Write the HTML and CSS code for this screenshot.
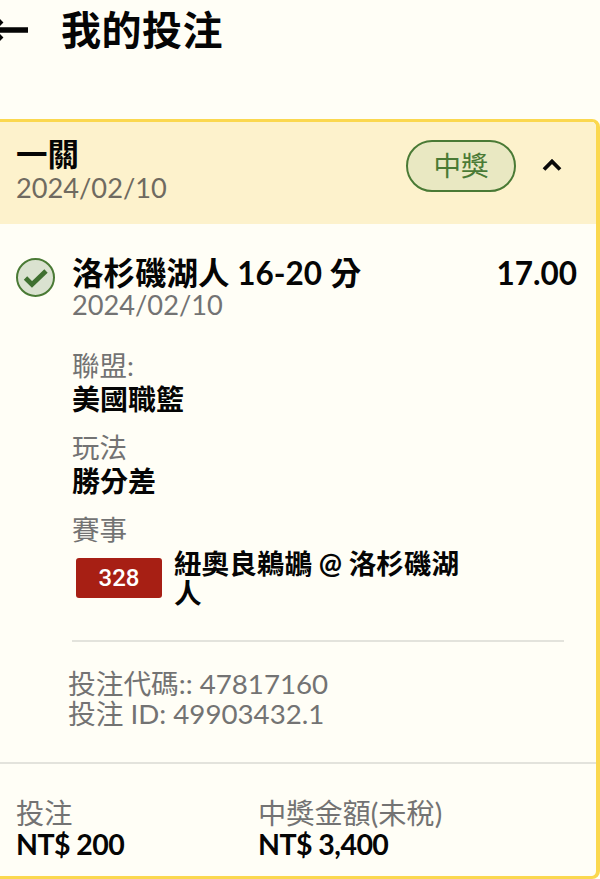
FILE: index.html
```html
<!DOCTYPE html>
<html lang="zh-Hant">
<head>
<meta charset="utf-8">
<title>我的投注</title>
<link rel="stylesheet" href="styles.css">
</head>
<body>
<div class="page">
  <header class="topbar">
    <svg class="back" width="40" height="28" viewBox="0 0 40 28"><path d="M2 14H38M11.500 4.500 2 14l9.500 9.500" fill="none" stroke="#050505" stroke-width="5.500"/></svg>
    <h1 class="title">我的投注</h1>
  </header>
  <section class="card">
    <div class="card-head">
      <div class="head-text">
        <div class="head-title">一關</div>
        <div class="date">2024/02/10</div>
      </div>
      <span class="badge">中獎</span>
      <svg class="chev" width="20" height="14" viewBox="0 0 20 14"><path d="M2 12.500 10 4.500l8 8" fill="none" stroke="#0a0a0a" stroke-width="3.800"/></svg>
    </div>
    <div class="body">
      <div class="leg">
        <svg class="check" width="40" height="40" viewBox="0 0 40 40"><circle cx="19.500" cy="19.500" r="18.500" fill="#dae2d0" stroke="#4a7a35" stroke-width="2"/><path d="M9.500 20l6.500 6.500L30 13" fill="none" stroke="#3f7030" stroke-width="4.800"/></svg>
        <div class="leg-main">
          <div class="leg-top">
            <div class="leg-name">洛杉磯湖人 16-20 分</div>
            <div class="odds">17.00</div>
          </div>
          <div class="date leg-date">2024/02/10</div>
          <div class="field"><div class="label">聯盟:</div><div class="value">美國職籃</div></div>
          <div class="field"><div class="label">玩法</div><div class="value">勝分差</div></div>
          <div class="field"><div class="label">賽事</div>
            <div class="event"><span class="num">328</span><span class="event-name">紐奧良鵜鶘 @ 洛杉磯湖人</span></div>
          </div>
        </div>
      </div>
      <hr class="rule">
      <div class="codes"><div>投注代碼:: 47817160</div><div>投注 ID: 49903432.1</div></div>
    </div>
    <div class="foot">
      <div class="foot-col"><div class="label">投注</div><div class="amount">NT$ 200</div></div>
      <div class="foot-col"><div class="label">中獎金額(未稅)</div><div class="amount">NT$ 3,400</div></div>
    </div>
  </section>
</div>
</body>
</html>
```
FILE: styles.css
```css
* { box-sizing: border-box; }
html, body { margin: 0; height: 100%; }
body { background: #fffef6; overflow: hidden; font-family: Lato, "Noto Sans CJK TC", sans-serif; color: #050505; }
.page { width: 610px; margin-left: -10px; }
.topbar { display: flex; align-items: center; height: 119px; padding-bottom: 60px; gap: 31px; }
.back { flex: none; }
.title { margin: 0 0 4px; font-size: 40px; letter-spacing: 0.5px; line-height: 50px; font-weight: 700; font-family: "Noto Sans CJK TC", sans-serif; }
.card { border: 3px solid #fbd84f; border-right-width: 4px; border-radius: 8px; height: 760px; display: flex; flex-direction: column; background: #fffef6; overflow: hidden; }
.card-head { display: flex; align-items: flex-start; height: 102px; background: #fdf2cc; padding: 14px 0 0 23px; }
.head-text { flex: 1; }
.head-title { font-size: 31.5px; line-height: 36px; margin-bottom: 1px; font-weight: 700; }
.date { color: #6f6a60; font-size: 27.2px; line-height: 30px; }
.badge { width: 110px; height: 52px; margin-top: 4px; border: 2px solid #4a7a35; border-radius: 26px; background: #e9e8c2; color: #4a7a35; font-size: 27.5px; line-height: 48px; text-align: center; }
.chev { margin: 21px 34px 0 26px; }
.body { flex: 1; padding: 33px 19px 0 23px; }
.leg { display: flex; gap: 16px; }
.check { flex: none; margin-top: 1px; }
.leg-main { flex: 1; }
.leg-top { display: flex; justify-content: space-between; }
.leg-name, .odds { font-size: 31.5px; line-height: 32px; font-weight: 700; }
.leg-date { color: #737373; line-height: 30px; margin: 1px 0 30px; }
.field { margin-top: 14px; }
.label { color: #737373; font-size: 27.5px; line-height: 31px; }
.value { font-size: 28px; line-height: 37px; font-weight: 700; }
.event { display: flex; align-items: flex-start; gap: 12px; margin: 4px 115px 0 4px; }
.num { flex: none; width: 86px; height: 40px; margin-top: 9px; border-radius: 3px; background: #a71f14; color: #fff; font-family: Roboto, sans-serif; font-size: 24px; line-height: 40px; font-weight: 500; text-align: center; }
.event-name { font-size: 27.6px; line-height: 29px; font-weight: 700; }
.rule { margin: 33px 13px 0 56px; border: 0; border-top: 2px solid #e3e3dc; }
.codes { margin: 27px 0 0 52px; color: #737373; font-size: 27.7px; line-height: 30px; }
.foot { height: 114px; border-top: 2px solid #e3e3dc; padding: 34px 0 0 23px; display: flex; }
.foot-col { width: 242px; }
.foot-col .label { font-size: 28.2px; line-height: 31px; }
.amount { font-size: 28.5px; line-height: 30px; font-weight: 700; letter-spacing: -0.55px; }
```
